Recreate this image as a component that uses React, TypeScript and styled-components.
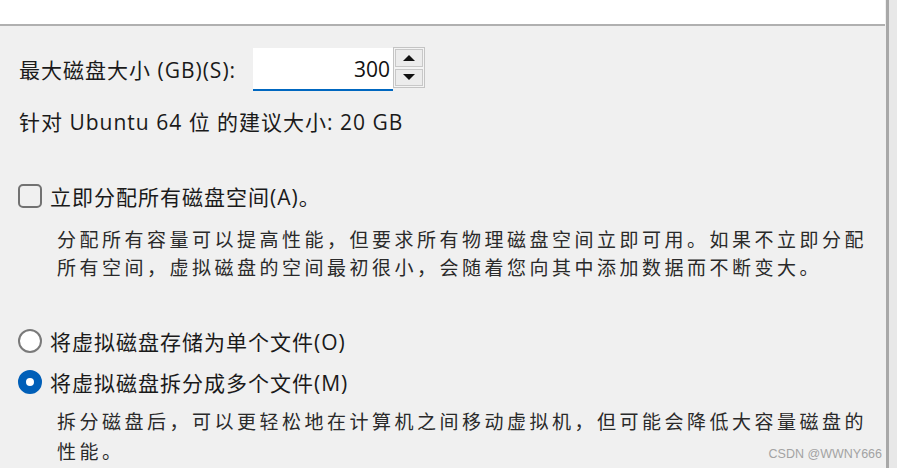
import styled, { createGlobalStyle } from 'styled-components';

const GlobalStyle = createGlobalStyle`
  html, body {
    margin: 0;
    padding: 0;
    background: #f0f0f0;
    overflow: hidden;
  }
  #root {
    height: 468px;
  }
`;

const Frame = styled.div`
  position: relative;
  display: flex;
  width: 897px;
  height: 468px;
  font-family: "Open Sans", "Noto Sans CJK SC", sans-serif;
  color: #1a1a1a;
`;

const Main = styled.div`
  flex: 1;
  display: flex;
  flex-direction: column;
`;

const TopBand = styled.div`
  height: 24px;
  background: #ffffff;
  border-bottom: 2px solid #b0b0b0;
  margin-right: 1px;
`;

const RightEdge = styled.div`
  width: 8px;
  background: #e8e8e8;
  border-left: 3px solid #a8a8a8;
`;

const Content = styled.div`
  display: flex;
  flex-direction: column;
  padding-left: 19px;
`;

const Row = styled.div<{ $top: number; $height: number }>`
  display: flex;
  align-items: center;
  margin-top: ${(p) => p.$top}px;
  height: ${(p) => p.$height}px;
  font-size: 21px;
  letter-spacing: 1px;
  white-space: nowrap;
`;

const SizeLabel = styled.span`
  width: 234px;
`;

const Field = styled.div`
  width: 137px;
  height: 41px;
  background: #ffffff;
  border-bottom: 2px solid #0067c0;
  display: flex;
  align-items: center;
  justify-content: flex-end;
  padding-right: 3px;
  font-size: 21px;
  letter-spacing: 0;
  color: #111;
  align-self: flex-start;
  margin-top: 1px;
`;

const Spinner = styled.div`
  width: 30px;
  height: 39px;
  border: 1px solid #c4c4c4;
  display: flex;
  flex-direction: column;
  align-self: flex-start;
  background: #f4f4f4;
`;

const SpinButton = styled.div`
  flex: 1;
  display: flex;
  align-items: center;
  justify-content: center;
  margin: 1px;
  border: 1px solid #c8c8c8;
  background: #ececec;
`;

const Arrow = styled.span<{ $up?: boolean }>`
  width: 0;
  height: 0;
  border-left: 6px solid transparent;
  border-right: 6px solid transparent;
  ${(p) => (p.$up ? 'border-bottom: 6px solid #111;' : 'border-top: 6px solid #111;')}
`;

const CheckBox = styled.span`
  width: 20px;
  height: 20px;
  border: 2px solid #727272;
  border-radius: 5px;
  margin-right: 8px;
  box-sizing: content-box;
  margin-left: -1px;
`;

const Radio = styled.span<{ $checked?: boolean }>`
  width: 24px;
  height: 24px;
  box-sizing: border-box;
  border-radius: 50%;
  margin-left: -1px;
  margin-right: 8px;
  display: flex;
  align-items: center;
  justify-content: center;
  border: ${(p) => (p.$checked ? '8px solid #005fb8' : '2px solid #7a7a7a')};
  background: #ffffff;
`;

const Desc = styled.div<{ $top: number; $lineHeight: number }>`
  margin-top: ${(p) => p.$top}px;
  padding-left: 38px;
  font-family: "Noto Sans CJK SC", sans-serif;
  font-size: 19px;
  letter-spacing: 3.5px;
  line-height: ${(p) => p.$lineHeight}px;
  color: #2a2a2a;
`;

const DescLine = styled.div`
  white-space: nowrap;
`;

const Watermark = styled.span`
  position: absolute;
  right: 15px;
  bottom: 7px;
  font-family: "Liberation Sans", Arial, sans-serif;
  font-size: 12.5px;
  color: #a3a3a3;
`;

const allocLines = [
  '分配所有容量可以提高性能，但要求所有物理磁盘空间立即可用。如果不立即分配',
  '所有空间，虚拟磁盘的空间最初很小，会随着您向其中添加数据而不断变大。',
];

const splitLines = [
  '拆分磁盘后，可以更轻松地在计算机之间移动虚拟机，但可能会降低大容量磁盘的',
  '性能。',
];

export default function App() {
  return (
    <>
      <GlobalStyle />
      <Frame>
        <Main>
          <TopBand />
          <Content>
            <Row $top={21} $height={43}>
              <SizeLabel>最大磁盘大小 (GB)(S):</SizeLabel>
              <Field>300</Field>
              <Spinner>
                <SpinButton>
                  <Arrow $up />
                </SpinButton>
                <SpinButton>
                  <Arrow />
                </SpinButton>
              </Spinner>
            </Row>
            <Row $top={16} $height={30}>
              针对 Ubuntu 64 位 的建议大小: 20 GB
            </Row>
            <Row $top={45} $height={30}>
              <CheckBox />
              立即分配所有磁盘空间(A)。
            </Row>
            <Desc $top={14} $lineHeight={28}>
              {allocLines.map((line) => (
                <DescLine key={line}>{line}</DescLine>
              ))}
            </Desc>
            <Row $top={45} $height={30}>
              <Radio />
              将虚拟磁盘存储为单个文件(O)
            </Row>
            <Row $top={11} $height={30}>
              <Radio $checked />
              将虚拟磁盘拆分成多个文件(M)
            </Row>
            <Desc $top={9} $lineHeight={30}>
              {splitLines.map((line) => (
                <DescLine key={line}>{line}</DescLine>
              ))}
            </Desc>
          </Content>
        </Main>
        <RightEdge />
        <Watermark>CSDN @WWNY666</Watermark>
      </Frame>
    </>
  );
}
